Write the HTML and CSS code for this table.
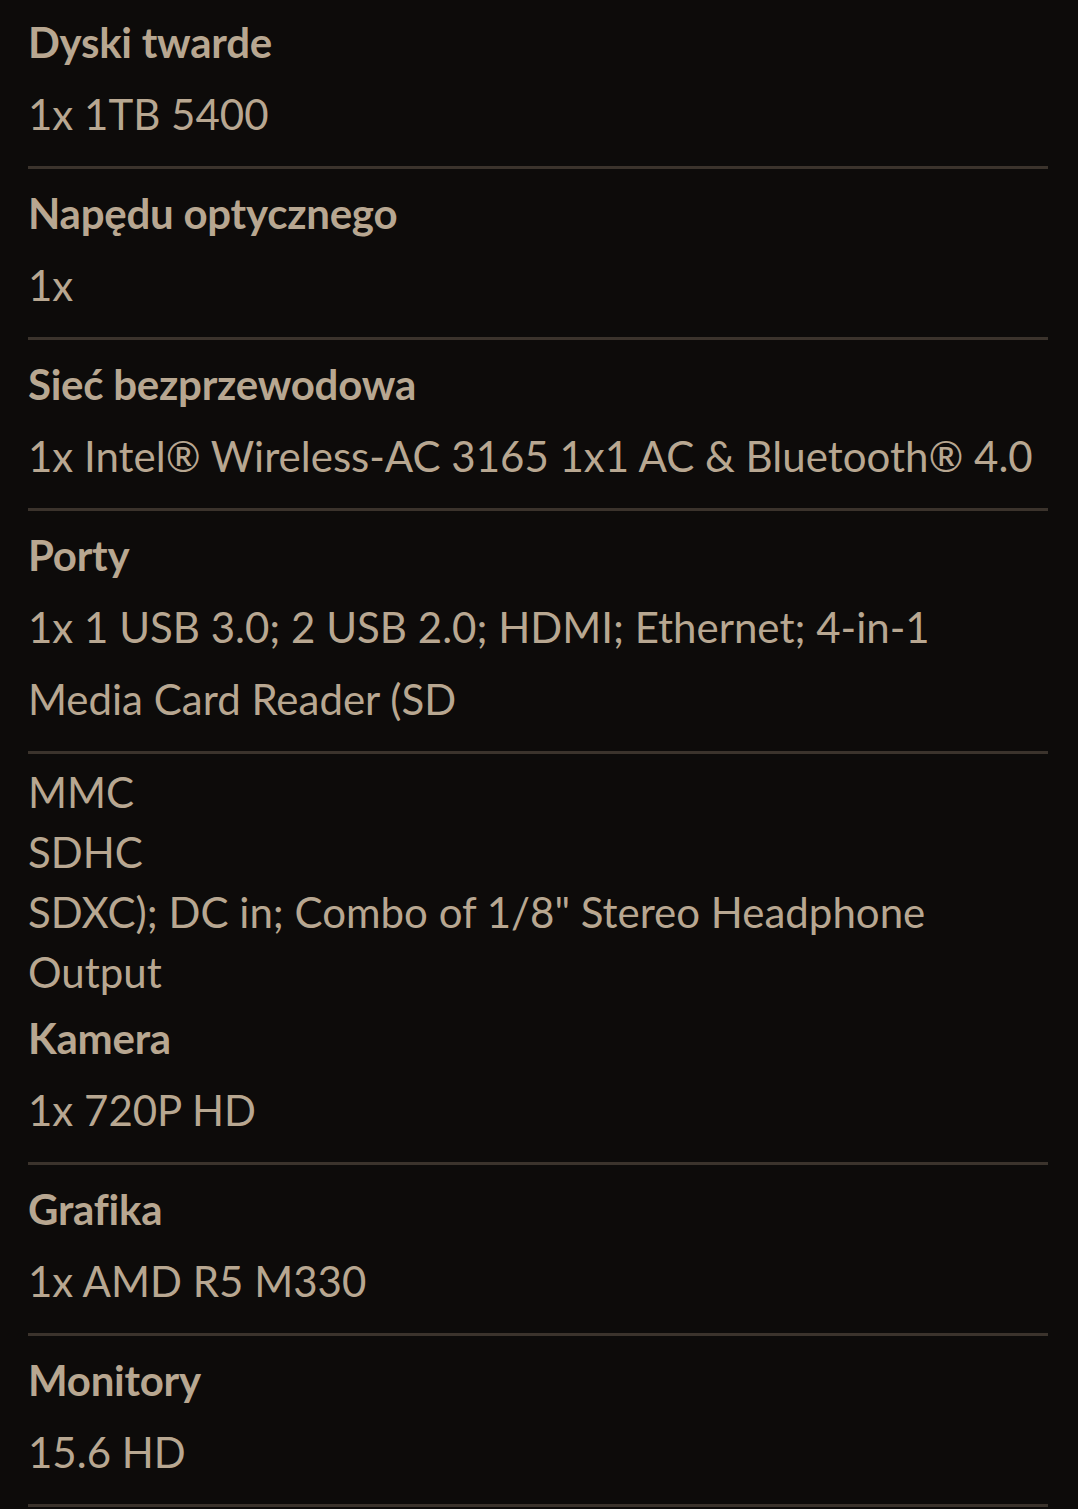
FILE: index.html
```html
<!DOCTYPE html>
<html>
<head>
    <meta charset="utf-8">
    <meta name="viewport" content="width=device-width, initial-scale=1">
    <title>Specyfikacja</title>
    <link rel="stylesheet" href="styles.css">
</head>
<body>
    <div class="specs">
        <div class="spec">
            <div class="spec-name">Dyski twarde</div>
            <div class="spec-value">1x 1TB 5400</div>
        </div>
        <div class="spec">
            <div class="spec-name">Napędu optycznego</div>
            <div class="spec-value">1x</div>
        </div>
        <div class="spec">
            <div class="spec-name">Sieć bezprzewodowa</div>
            <div class="spec-value">1x Intel® Wireless-AC 3165 1x1 AC &amp; Bluetooth® 4.0</div>
        </div>
        <div class="spec">
            <div class="spec-name">Porty</div>
            <div class="spec-value">1x 1 USB 3.0; 2 USB 2.0; HDMI; Ethernet; 4-in-1 Media Card Reader (SD</div>
        </div>
        <div class="spec-extra">
            MMC<br>
            SDHC<br>
            SDXC); DC in; Combo of 1/8" Stereo Headphone<br>
            Output
        </div>
        <div class="spec">
            <div class="spec-name">Kamera</div>
            <div class="spec-value">1x 720P HD</div>
        </div>
        <div class="spec">
            <div class="spec-name">Grafika</div>
            <div class="spec-value">1x AMD R5 M330</div>
        </div>
        <div class="spec">
            <div class="spec-name">Monitory</div>
            <div class="spec-value">15.6 HD</div>
        </div>
    </div>
</body>
</html>
```

FILE: styles.css
```css
body {
    margin: 0;
    background-color: #0d0b0a;
    color: #b8a791;
    font-family: Lato, "Open Sans", sans-serif;
    font-size: 42px;
}

.specs {
    padding: 6px 30px 0 28px;
}

.spec {
    padding-bottom: 16px;
    border-bottom: 3px solid #3b332c;
    margin-bottom: 8px;
    line-height: 72px;
}

.spec-name {
    font-weight: bold;
    letter-spacing: -0.25px;
}

.spec-extra {
    line-height: 60px;
}
```
